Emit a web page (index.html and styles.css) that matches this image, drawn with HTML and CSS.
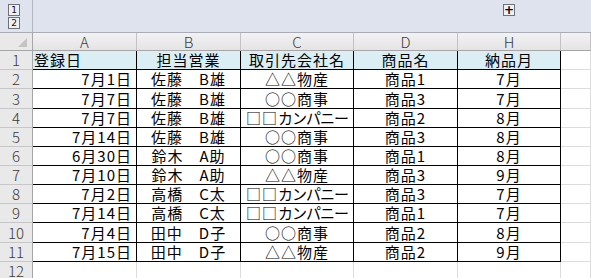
FILE: index.html
```html
<!DOCTYPE html>
<html lang="ja">
<head>
<meta charset="utf-8">
<title>Sheet</title>
<link rel="stylesheet" href="styles.css">
</head>
<body>
<div class="bar">
  <div class="gutter">
    <div class="lvl">1</div>
    <div class="lvl">2</div>
  </div>
  <div class="bar-main">
    <div class="plus">+</div>
  </div>
</div>
<div class="sheet">
  <div class="corner"><span class="tri"></span></div>
  <div class="ch">A</div><div class="ch">B</div><div class="ch">C</div><div class="ch">D</div><div class="ch">H</div><div class="ch"></div>

  <div class="rh">1</div>
  <div class="c t hd l">登録日</div><div class="c t hd m">担当営業</div><div class="c t hd m">取引先会社名</div><div class="c t hd m">商品名</div><div class="c t hd m">納品月</div><div class="c"></div>

  <div class="rh">2</div>
  <div class="c t r">7月1日</div><div class="c t m">佐藤　B雄</div><div class="c t m">△△物産</div><div class="c t m">商品1</div><div class="c t m">7月</div><div class="c"></div>

  <div class="rh">3</div>
  <div class="c t r">7月7日</div><div class="c t m">佐藤　B雄</div><div class="c t m">○○商事</div><div class="c t m">商品3</div><div class="c t m">7月</div><div class="c"></div>

  <div class="rh">4</div>
  <div class="c t r">7月7日</div><div class="c t m">佐藤　B雄</div><div class="c t m">□□<span class="kana">カンパニー</span></div><div class="c t m">商品2</div><div class="c t m">8月</div><div class="c"></div>

  <div class="rh">5</div>
  <div class="c t r">7月14日</div><div class="c t m">佐藤　B雄</div><div class="c t m">○○商事</div><div class="c t m">商品3</div><div class="c t m">8月</div><div class="c"></div>

  <div class="rh">6</div>
  <div class="c t r">6月30日</div><div class="c t m">鈴木　A助</div><div class="c t m">○○商事</div><div class="c t m">商品1</div><div class="c t m">8月</div><div class="c"></div>

  <div class="rh">7</div>
  <div class="c t r">7月10日</div><div class="c t m">鈴木　A助</div><div class="c t m">△△物産</div><div class="c t m">商品3</div><div class="c t m">9月</div><div class="c"></div>

  <div class="rh">8</div>
  <div class="c t r">7月2日</div><div class="c t m">高橋　C太</div><div class="c t m">□□<span class="kana">カンパニー</span></div><div class="c t m">商品3</div><div class="c t m">7月</div><div class="c"></div>

  <div class="rh">9</div>
  <div class="c t r">7月14日</div><div class="c t m">高橋　C太</div><div class="c t m">□□<span class="kana">カンパニー</span></div><div class="c t m">商品1</div><div class="c t m">7月</div><div class="c"></div>

  <div class="rh">10</div>
  <div class="c t r">7月4日</div><div class="c t m">田中　D子</div><div class="c t m">○○商事</div><div class="c t m">商品2</div><div class="c t m">8月</div><div class="c"></div>

  <div class="rh">11</div>
  <div class="c t r">7月15日</div><div class="c t m">田中　D子</div><div class="c t m">△△物産</div><div class="c t m">商品2</div><div class="c t m">9月</div><div class="c"></div>

  <div class="rh">12</div>
  <div class="c"></div><div class="c"></div><div class="c"></div><div class="c"></div><div class="c"></div><div class="c"></div>
</div>
</body>
</html>
```

FILE: styles.css
```css
* { box-sizing: border-box; }
html, body {
  margin: 0;
  padding: 0;
  background: #ffffff;
  overflow: hidden;
}
body {
  width: 591px;
  height: 278px;
  font-family: "Noto Sans CJK JP", "Noto Sans", sans-serif;
}

/* outline bar */
.bar {
  display: flex;
  height: 33px;
  background: #dfe3ed;
  border-bottom: 1px solid #a9acb2;
}
.gutter {
  width: 33px;
  border-right: 1px solid #b4b7bd;
  padding: 4px 0 0 8px;
  display: flex;
  flex-direction: column;
  gap: 1px;
}
.lvl {
  width: 12px;
  height: 12px;
  border: 1px solid #6f7278;
  background: #eef0f5;
  font: 9px/10px "DejaVu Sans", sans-serif;
  color: #111;
  text-align: center;
}
.bar-main {
  flex: 1;
  padding: 4px 0 0 470px;
}
.plus {
  width: 12px;
  height: 12px;
  border: 1px solid #6f7278;
  background: #eef0f5;
  font: bold 12px/10px "DejaVu Sans", sans-serif;
  color: #000;
  text-align: center;
}

/* sheet grid */
.sheet {
  display: grid;
  grid-template-columns: 33px 104px 104px 113px 104px 103px 1fr;
  grid-template-rows: 18px 19px 19px 20px 19px 19px 19px 19px 19px 19px 20px 19px 19px;
  font-weight: 300;
}
.corner {
  position: relative;
  background: #e9e9ea;
  border-right: 1px solid #a6a6a6;
  border-bottom: 1px solid #a6a6a6;
}
.tri {
  position: absolute;
  right: 5px;
  bottom: 3px;
  width: 0;
  height: 0;
  border-left: 9px solid transparent;
  border-bottom: 9px solid #c4c4c4;
}
.ch {
  background: linear-gradient(#f2f2f3, #e4e4e6);
  border-right: 1px solid #c2c2c4;
  border-bottom: 1px solid #a6a6a6;
  display: flex;
  align-items: center;
  justify-content: center;
  font-size: 15px;
  color: #3a3a3a;
  line-height: 16px;
}
.rh {
  background: #e9e9ea;
  border-right: 1px solid #a6a6a6;
  border-bottom: 1px solid #c6c6c8;
  display: flex;
  align-items: center;
  justify-content: center;
  font-size: 15px;
  color: #3a3a3a;
  line-height: 16px;
}
.c {
  border-right: 1px solid #dadcdd;
  border-bottom: 1px solid #dadcdd;
  display: flex;
  align-items: center;
  font-size: 15px;
  font-weight: 400;
  letter-spacing: 1px;
  color: #000;
  line-height: 16px;
  white-space: nowrap;
}
.t {
  border-right-color: #000;
  border-bottom-color: #000;
}
.hd { background: #daeef3; }
.l { justify-content: flex-start; padding-left: 1px; }
.m { justify-content: center; }
.r { justify-content: flex-end; padding-right: 4px; }
.kana { letter-spacing: -1px; }
```
